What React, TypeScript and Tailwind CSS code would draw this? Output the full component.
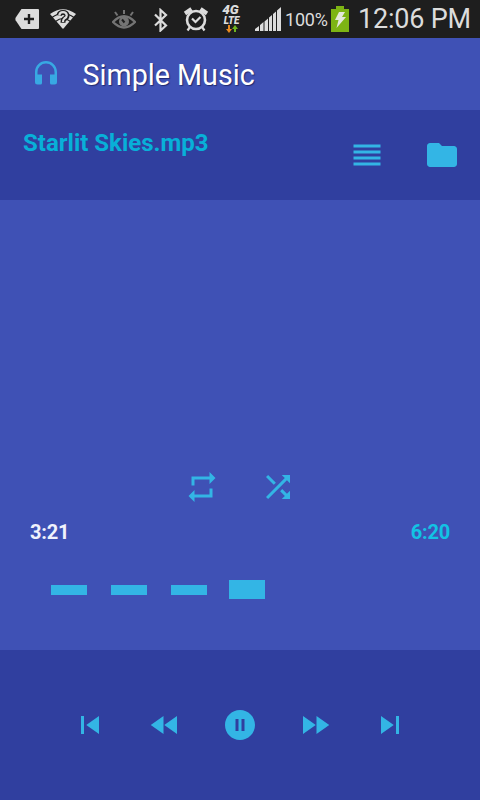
import React from "react";

type IconProps = { d: string; className?: string };

const Icon = ({ d, className = "size-9" }: IconProps) => (
  <svg viewBox="0 0 24 24" className={`shrink-0 fill-current ${className}`}>
    <path d={d} />
  </svg>
);

const icons = {
  list: "M3 15h18v-2H3v2zm0 4h18v-2H3v2zm0-8h18V9H3v2zm0-6v2h18V5H3z",
  folder: "M10 4H4c-1.1 0-2 .9-2 2v12c0 1.1.9 2 2 2h16c1.1 0 2-.9 2-2V8c0-1.1-.9-2-2-2h-8l-2-2z",
  repeat: "M7 7h10v3l4-4-4-4v3H5v6h2V7zm10 10H7v-3l-4 4 4 4v-3h12v-6h-2v4z",
  shuffle:
    "M10.59 9.17L5.41 4 4 5.41l5.17 5.17 1.42-1.41zM14.5 4l2.04 2.04L4 18.59 5.41 20 17.96 7.46 20 9.5V4h-5.5zm.33 9.41l-1.41 1.41 3.13 3.13L14.5 20H20v-5.5l-2.04 2.04-3.13-3.13z",
  previous: "M6 6h2v12H6zm3.5 6l8.5 6V6z",
  rewind: "M11 18V6l-8.5 6 8.5 6zm.5-6l8.5 6V6l-8.5 6z",
  pause: "M12 2C6.48 2 2 6.48 2 12s4.48 10 10 10 10-4.48 10-10S17.52 2 12 2zm-1 14H9V8h2v8zm4 0h-2V8h2v8z",
  forward: "M4 18l8.5-6L4 6v12zm9-12v12l8.5-6L13 6z",
  next: "M6 18l8.5-6L6 6v12zM16 6v12h2V6h-2z",
};

function StatusBar() {
  return (
    <header className="flex h-[38px] items-center bg-[#1e1e1e] text-[#dcdcdc]">
      <svg viewBox="0 0 24 20" className="ml-[15px] h-5 w-6 shrink-0">
        <path d="M6.5 0H23q1 0 1 1v18q0 1-1 1H6.500L.6 11.200q-.6-1.200 0-2.400z" fill="#dcdcdc" />
        <path d="M14 5v10M9 10h10" stroke="#1e1e1e" strokeWidth="2.400" />
      </svg>
      <svg viewBox="0 0 26 20" className="ml-[11px] h-5 w-[26px] shrink-0" fill="none">
        <path d="M0 5Q13-4.500 26 5L13 20z" fill="#dcdcdc" />
        <path d="M2 8.500q11-8 22 0M5.500 12.500q7.500-6 15 0" stroke="#1e1e1e" strokeWidth="1.200" />
        <path d="M9 6.500Q9.500 3.500 13 3.500t4 3q0 2-2.500 3.300-1.500.8-1.500 4" stroke="#1e1e1e" strokeWidth="5" />
        <path d="M9.200 6.500Q9.700 3.200 13 3.200t3.800 3.100q0 2-2.500 3.300-1.300.8-1.300 3.400M13 15v4" stroke="#dcdcdc" strokeWidth="2.200" />
      </svg>
      <svg viewBox="0 0 24 20" className="ml-[36px] h-5 w-6 shrink-0" fill="none" stroke="#747474">
        <path d="M1 13Q12 1.500 23 13 12 24 1 13z" strokeWidth="2.400" />
        <circle cx="12" cy="12.500" r="5" fill="#747474" stroke="none" />
        <path d="M10 10.500l2.500 3" stroke="#1e1e1e" strokeWidth="2" />
        <path d="M12 1v4M3 3l2.500 3.500M21 3l-2.500 3.500" strokeWidth="2" />
      </svg>
      <svg viewBox="0 0 16 24" className="ml-[17px] mt-px h-6 w-4 shrink-0" fill="none" stroke="#dcdcdc" strokeWidth="2.200">
        <path d="M2 6.500l11 11-5.500 5V2L13 7 2 17.500" />
      </svg>
      <svg viewBox="0 0 26 26" className="ml-[14px] h-[26px] w-[26px] shrink-0" fill="none" stroke="#dcdcdc">
        <circle cx="13" cy="14" r="9" strokeWidth="2.600" />
        <path d="M9 12.500l3.500 3.500 5-5M7 21l-2.500 3.500M19 21l2.500 3.500" strokeWidth="2.200" />
        <path d="M2 7.500L8.500 3M24 7.500L17.500 3" strokeWidth="4" />
      </svg>
      <div className="ml-[10px] flex h-[28px] w-[23px] shrink-0 flex-col items-center font-black italic leading-none">
        <span className="h-[10px] text-[13.5px] leading-[9px]">4G</span>
        <span className="h-[10px] pl-0.5 text-[10px] leading-[11px] tracking-[-0.1px]">LTE</span>
        <svg viewBox="0 0 12 8" className="ml-0.5 h-2 w-3">
          <path d="M2 0h2v4h2L3 8 0 4h2z" fill="#e88a20" />
          <path d="M8 7h2V4h2L9 0 6 4h2z" fill="#6fb51c" />
        </svg>
      </div>
      <svg viewBox="0 0 26 24" className="ml-[13px] h-6 w-[26px] shrink-0 fill-[#dcdcdc]">
        <path d="M0 24v-2l4-3v5zM5 24v-6l3.500-3v9zM9.500 24V14.500l3.500-3V24zM14 24V10.500L17 8v16zM18 24V7l3-2.500V24zM22 24V3.500L26 0v24z" />
      </svg>
      <span className="ml-[4px] mt-0.5 w-[46px] whitespace-nowrap text-[18px] leading-none tracking-[-0.2px]">100%</span>
      <svg viewBox="0 0 18 26" className="h-[26px] w-[18px] shrink-0">
        <path d="M5 0h8v3h5v23H0V3h5z" fill="#7db414" />
        <path d="M8 6h6l-3 5h4L5.500 22l2-8H4z" fill="#e4e8dc" />
      </svg>
      <span className="ml-[9px] mt-px whitespace-nowrap text-[27px] leading-none tracking-[-0.2px]">12:06 PM</span>
    </header>
  );
}

export default function App() {
  return (
    <main className="flex h-[800px] w-[480px] flex-col overflow-hidden bg-[#3f51b5] font-['Roboto',sans-serif] text-[#33b5e5]">
      <StatusBar />
      <div className="flex h-[72px] items-center pl-[35px]">
        <svg viewBox="0 0 22 24" className="mb-[3px] h-6 w-[22px] shrink-0 fill-[#38a9e3]">
          <path d="M11 0C5 0 0 4.900 0 11v10q0 2.500 2.500 2.500h3q1.500 0 1.500-1.500v-8.500H2.500V11a8.500 8.500 0 0 1 17 0v2.500H15V22q0 1.500 1.500 1.500h3q2.500 0 2.500-2.500V11C22 4.900 17 0 11 0z" />
        </svg>
        <h1 className="ml-[25.5px] mt-0.5 text-[28.7px] leading-none text-white [text-shadow:1px_1px_1px_#202a70]">Simple Music</h1>
      </div>
      <section className="flex h-[90px] items-center bg-[#303f9f] pr-5">
        <h2 className="ml-[23px] mb-6 flex-1 text-[24px] font-bold leading-none text-[#08b0d8]">Starlit Skies.mp3</h2>
        <div className="flex gap-[39px]">
          <Icon d={icons.list} />
          <Icon d={icons.folder} />
        </div>
      </section>
      <section className="flex h-[450px] flex-col pt-[269px]">
        <div className="flex justify-center gap-10">
          <Icon d={icons.repeat} />
          <Icon d={icons.shuffle} />
        </div>
        <div className="mt-[17px] flex justify-between px-[30px] text-[20px] font-bold leading-5 tracking-[-0.2px]">
          <span className="text-[#f0f2fc]">3:21</span>
          <span className="text-[#12c3e4]">6:20</span>
        </div>
        <div className="mt-[38px] ml-[51px] flex h-[19px] items-center">
          <div className="h-2.5 w-9 bg-[#33b5e5]" />
          <div className="ml-6 h-2.5 w-9 bg-[#33b5e5]" />
          <div className="ml-6 h-2.5 w-9 bg-[#33b5e5]" />
          <div className="ml-[22px] h-[19px] w-9 bg-[#33b5e5]" />
        </div>
      </section>
      <nav className="flex h-[150px] items-center justify-center gap-[39px] bg-[#303f9f]">
        <Icon d={icons.previous} />
        <Icon d={icons.rewind} />
        <Icon d={icons.pause} />
        <Icon d={icons.forward} />
        <Icon d={icons.next} />
      </nav>
    </main>
  );
}
